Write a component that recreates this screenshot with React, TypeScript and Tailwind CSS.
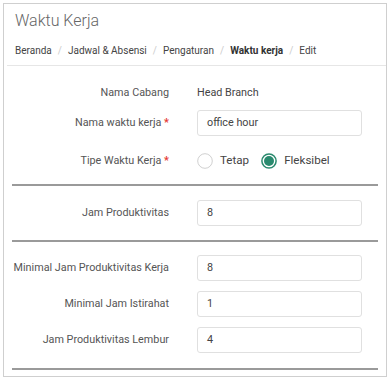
import React from "react";

function Divider() {
  return <div className="ml-[8px] h-[2px] w-[366px] bg-[#9a9a9a]" />;
}

function Label({ children, required }: { children: React.ReactNode; required?: boolean }) {
  return (
    <div className="w-[166px] shrink-0 text-right text-[10.8px] text-[#555] pr-[1px]">
      {children}
      {required && <span className="text-[#e53935] font-bold"> *</span>}
    </div>
  );
}

function InputRow({ label, value, required, className = "" }: { label: string; value: string; required?: boolean; className?: string }) {
  return (
    <div className={"flex items-center " + className}>
      <Label required={required}>{label}</Label>
      <div className="ml-[27px] flex h-[26px] w-[165px] items-center rounded-[3px] border border-[#e0e0e0] bg-white pl-[9px] text-[10.8px] text-[#444]">
        {value}
      </div>
    </div>
  );
}

function Radio({ checked }: { checked?: boolean }) {
  return (
    <svg width="16" height="16" viewBox="0 0 16 16" className="shrink-0">
      {checked ? (
        <>
          <circle cx="8" cy="8" r="7.1" fill="white" stroke="#2a8a6e" strokeWidth="1.5" />
          <circle cx="8" cy="8" r="5" fill="#2a8a6e" />
        </>
      ) : (
        <circle cx="8" cy="8" r="7.3" fill="white" stroke="#d0d0d0" strokeWidth="1" />
      )}
    </svg>
  );
}

export default function App() {
  return (
    <div className="bg-white w-[392px] h-[380px] pt-[3px] pl-[3px]" style={{ fontFamily: "Roboto, 'Liberation Sans', sans-serif" }}>
      <div className="w-[384px] h-[374px] border border-[#cfcfcf] bg-white">
        <div className="pl-[11px] pt-[7px]">
          <div className="text-[16px] leading-[20px] font-light text-[#666]">Waktu Kerja</div>
          <div className="mt-[13px] flex items-center text-[10px] leading-[14px] text-[#444]">
            <span>Beranda</span>
            <span className="px-[6px] text-[#ccc]">/</span>
            <span>Jadwal &amp; Absensi</span>
            <span className="px-[6px] text-[#ccc]">/</span>
            <span>Pengaturan</span>
            <span className="px-[6px] text-[#ccc]">/</span>
            <span className="font-bold text-[#333]">Waktu kerja</span>
            <span className="px-[6px] text-[#ccc]">/</span>
            <span>Edit</span>
          </div>
        </div>
        <div className="ml-[3px] mt-[7px] h-px bg-[#e6e6e6]" />

        <div className="pt-[14px]">
          <div className="flex h-[26px] items-center">
            <Label>Nama Cabang</Label>
            <div className="ml-[27px] text-[10.8px] text-[#444]">Head Branch</div>
          </div>
          <InputRow className="mt-[4px]" label="Nama waktu kerja" value="office hour" required />
          <div className="mt-[12px] flex h-[26px] items-center">
            <Label required>Tipe Waktu Kerja</Label>
            <div className="ml-[27px] flex items-center text-[11.6px] text-[#444]">
              <Radio />
              <span className="ml-[7px]">Tetap</span>
              <span className="ml-[12px] flex items-center">
                <Radio checked />
                <span className="ml-[7px]">Fleksibel</span>
              </span>
            </div>
          </div>
          <div className="mt-[10px]">
            <Divider />
          </div>
          <InputRow className="mt-[14px]" label="Jam Produktivitas" value="8" />
          <div className="mt-[14px]">
            <Divider />
          </div>
          <InputRow className="mt-[13px]" label="Minimal Jam Produktivitas Kerja" value="8" />
          <InputRow className="mt-[10px]" label="Minimal Jam Istirahat" value="1" />
          <InputRow className="mt-[10px]" label="Jam Produktivitas Lembur" value="4" />
          <div className="mt-[15px]">
            <Divider />
          </div>
        </div>
      </div>
    </div>
  );
}
